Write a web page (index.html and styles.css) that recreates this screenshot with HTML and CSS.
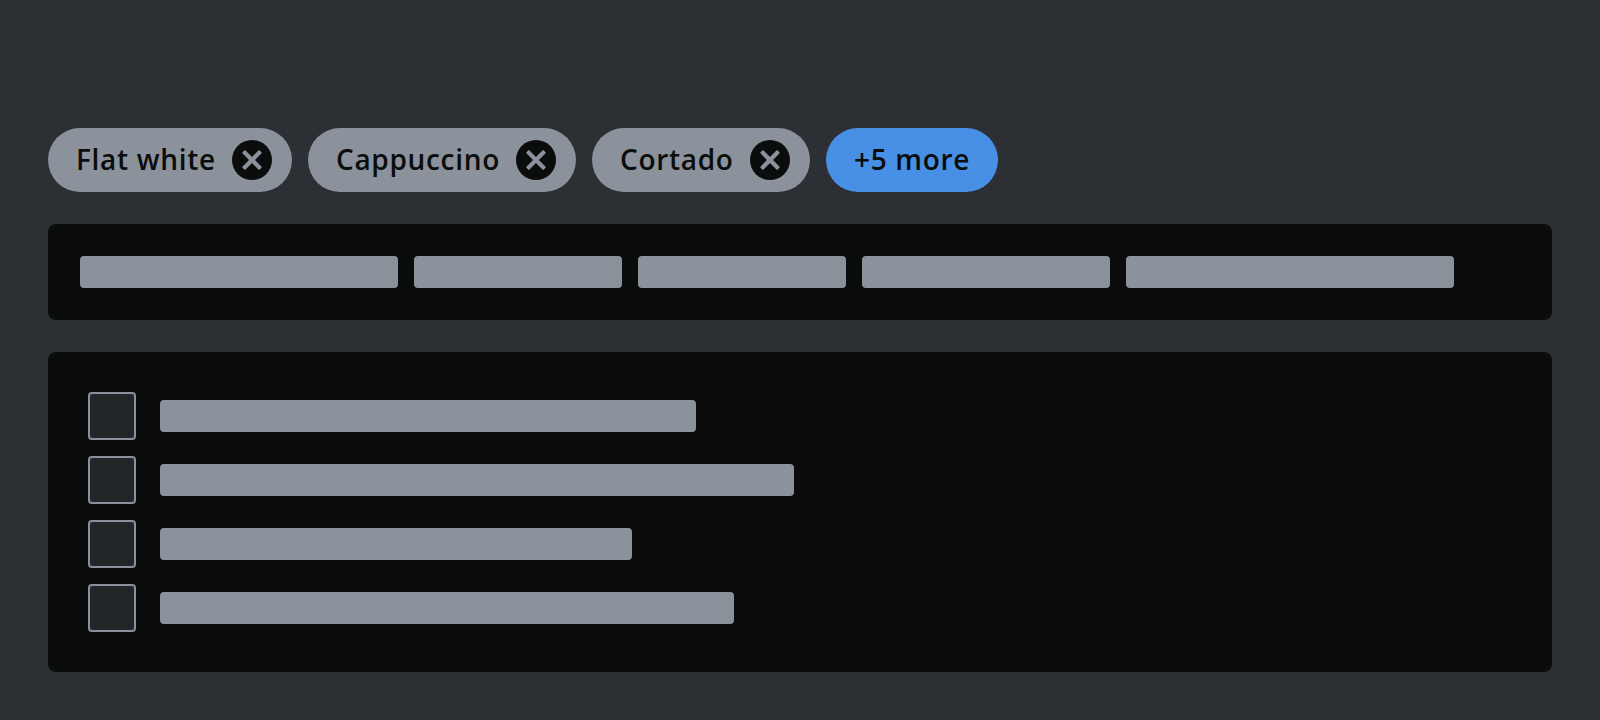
FILE: index.html
```html
<!DOCTYPE html>
<html lang="en">
<head>
<meta charset="utf-8">
<title>Filter tags</title>
<link rel="stylesheet" href="styles.css">
</head>
<body>
<main class="page">
  <div class="tags">
    <span class="tag tag-flat"><span class="label">Flat white</span><svg class="close" viewBox="0 0 40 40"><circle cx="20" cy="20" r="20"/><g transform="rotate(45 20 20)"><rect x="7.800" y="17.900" width="24.400" height="4.200" rx="1"/><rect x="17.900" y="7.800" width="4.200" height="24.400" rx="1"/></g></svg></span>
    <span class="tag tag-cap"><span class="label">Cappuccino</span><svg class="close" viewBox="0 0 40 40"><circle cx="20" cy="20" r="20"/><g transform="rotate(45 20 20)"><rect x="7.800" y="17.900" width="24.400" height="4.200" rx="1"/><rect x="17.900" y="7.800" width="4.200" height="24.400" rx="1"/></g></svg></span>
    <span class="tag tag-cor"><span class="label">Cortado</span><svg class="close" viewBox="0 0 40 40"><circle cx="20" cy="20" r="20"/><g transform="rotate(45 20 20)"><rect x="7.800" y="17.900" width="24.400" height="4.200" rx="1"/><rect x="17.900" y="7.800" width="4.200" height="24.400" rx="1"/></g></svg></span>
    <span class="tag tag-more"><span class="label">+5 more</span></span>
  </div>
  <section class="panel toolbar">
    <div class="bar" style="width:318px"></div>
    <div class="bar" style="width:208px"></div>
    <div class="bar" style="width:208px"></div>
    <div class="bar" style="width:248px"></div>
    <div class="bar" style="width:328px"></div>
  </section>
  <section class="panel list">
    <div class="row"><span class="check"></span><div class="bar" style="width:536px"></div></div>
    <div class="row"><span class="check"></span><div class="bar" style="width:634px"></div></div>
    <div class="row"><span class="check"></span><div class="bar" style="width:472px"></div></div>
    <div class="row"><span class="check"></span><div class="bar" style="width:574px"></div></div>
  </section>
</main>
</body>
</html>
```
FILE: styles.css
```css
* { box-sizing: border-box; }
body { margin: 0; background: #2c2f34; font-family: "Open Sans", "Noto Sans", sans-serif; }
.page { height: 720px; padding: 128px 48px 48px; display: flex; flex-direction: column; gap: 32px; }
.tags { display: flex; gap: 16px; height: 64px; }
.tag {
  display: flex; align-items: center; justify-content: space-between;
  height: 64px; padding: 0 20px 0 28px; border-radius: 32px;
  background: #8b929b; color: #0a0d0b;
  font-size: 28px; font-weight: 600; letter-spacing: 0.68px; white-space: nowrap;
}
.label { line-height: 38px; padding-bottom: 2px; }
.tag-flat { width: 244px; }
.tag-cap { width: 268px; }
.tag-cor { width: 218px; }
.tag-more { width: 172px; background: #488fe6; }
.close { width: 40px; height: 40px; flex: none; fill: #0a0d0b; }
.close rect { fill: #8b929b; }
.panel { background: #0a0d0b; border-radius: 8px; }
.toolbar { display: flex; gap: 16px; height: 96px; padding: 32px; }
.bar { height: 32px; border-radius: 4px; background: #8b929b; flex: none; }
.list { display: flex; flex-direction: column; gap: 16px; height: 320px; padding: 40px; }
.row { display: flex; align-items: center; gap: 24px; height: 48px; }
.check { width: 48px; height: 48px; border: 2px solid #8b929b; border-radius: 4px; background: #222629; }
```
